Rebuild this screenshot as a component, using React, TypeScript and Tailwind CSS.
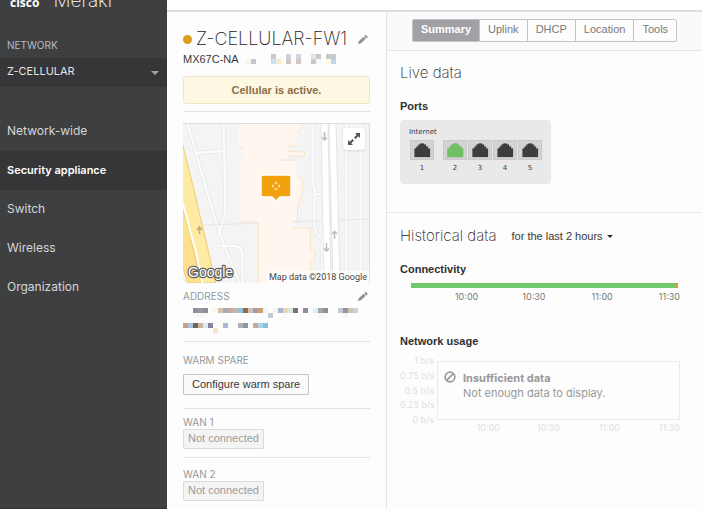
import { useState } from 'react'
import clsx from 'clsx'

const NAV = ['Network-wide', 'Security appliance', 'Switch', 'Wireless', 'Organization']
const TABS = ['Summary', 'Uplink', 'DHCP', 'Location', 'Tools']
const HOURS = ['10:00', '10:30', '11:00', '11:30']
const RATES = ['1 b/s', '0.75 b/s', '0.5 b/s', '0.25 b/s', '0 b/s']

// Each cell is [column, row, colour] on a 5px grid
type Cell = [number, number, string]

const SERIAL: Cell[] = [
  [0, 1, '#fbf3ea'], [1, 1, '#c5c6ca'],
  [5, 0, '#c9cace'], [5, 1, '#c3e4f0'], [6, 1, '#f7e8cd'],
  [8, 0, '#d0d4de'], [8, 1, '#d3c5bf'],
  [10, 0, '#d0d4de'], [10, 1, '#d3c5bf'],
  [13, 0, '#e3e4e5'], [13, 1, '#c8c9cd'], [14, 0, '#c8c9cd'], [14, 1, '#f3f8fb'],
  [16, 0, '#cbc8cc'], [16, 1, '#fdf8e8'], [17, 0, '#c8c9cc'], [17, 1, '#bdd4ea'],
]

const ADDRESS: Cell[] = [
  [2, 0, '#8f8f9d'], [3, 0, '#9a97a5'], [4, 0, '#8d8c98'], [6, 0, '#fdf8e4'],
  [7, 0, '#d0c3b0'], [8, 0, '#a8a9ae'], [9, 0, '#c3aca6'], [10, 0, '#cbb59f'],
  [11, 0, '#8cc3e4'], [12, 0, '#9b6a43'], [13, 0, '#cfc1bc'], [14, 0, '#a19da0'],
  [15, 0, '#cda07a'], [16, 0, '#eef4fb'], [18, 0, '#fbf3e8'], [19, 0, '#a8b8d0'],
  [20, 0, '#f0d6b4'], [21, 0, '#d6ebd8'], [22, 0, '#7b6f80'], [24, 0, '#8d8ca0'],
  [26, 0, '#dceff8'], [27, 0, '#a0a8ac'], [28, 0, '#8f8f98'], [31, 0, '#c9cad0'],
  [32, 0, '#94949e'], [33, 0, '#cfc4b0'], [34, 0, '#d0d0d6'],
  [2, 1, '#f8f8fa'], [3, 1, '#f8f8fa'], [4, 1, '#f9f9fa'], [17, 1, '#c9cace'],
  [20, 1, '#f9f9fa'], [27, 1, '#f6f6f8'], [28, 1, '#f9f9fb'], [32, 1, '#f6f6f8'],
  [0, 3, '#c8a088'], [1, 3, '#a9c3e0'], [2, 3, '#6e665a'], [3, 3, '#cdb49a'],
  [4, 3, '#d9ecf5'], [5, 3, '#8d7fa0'], [6, 4, '#f6e3cc'], [8, 3, '#a8b8d4'],
  [11, 3, '#b0b0bc'], [12, 3, '#9494a0'], [14, 3, '#c8aa94'], [15, 3, '#a8d4ee'],
  [16, 3, '#8cbce0'],
]

function Mosaic({ cells, cols, rows }: { cells: Cell[]; cols: number; rows: number }) {
  return (
    <svg width={cols * 5} height={rows * 5} shapeRendering="crispEdges" aria-hidden="true">
      {cells.map(([x, y, fill]) => (
        <rect key={`${x}-${y}`} x={x * 5} y={y * 5} width="5" height="5" fill={fill} />
      ))}
    </svg>
  )
}

function Caret({ className }: { className?: string }) {
  return (
    <svg viewBox="0 0 8 4" className={clsx('pointer-events-none shrink-0', className)} aria-hidden="true">
      <path d="M0 0h8L4 4z" fill="currentColor" />
    </svg>
  )
}

function EditButton({ label }: { label: string }) {
  return (
    <button type="button" aria-label={label} className="mr-0.5 ml-auto shrink-0 text-[#8f9193]">
      <svg width="10" height="9" viewBox="0 0 10 9">
        <path d="M0 9L.8 6.200L5.600 1.700L7.700 3.800L3 8.300z" fill="currentColor" />
        <path d="M6.200 1.200L7.100.3q.5-.4 1 0L9.500 1.600q.4.400 0 .900l-1.100.9z" fill="currentColor" />
      </svg>
    </button>
  )
}

function Sidebar() {
  return (
    <aside className="w-[167px] shrink-0 border-b border-[#333335] bg-[#3e3f41] font-['Inter',sans-serif] text-[#d6d7d8]">
      <div className="flex h-[11px] items-end gap-3.5 overflow-hidden pl-2.5 text-white">
        <span className="font-['Open_Sans',sans-serif] text-[12px] leading-4 font-bold">cisco</span>
        <span className="text-[19px] leading-5 font-extralight">Meraki</span>
      </div>
      <label htmlFor="network" className="mt-[26px] block px-[7px] text-[10px] leading-4 text-[#b4bcc4]">
        NETWORK
      </label>
      <div className="mt-[5px] flex h-[29px] items-center bg-[#363638] pr-2">
        <select
          id="network"
          className="h-full min-w-0 flex-1 appearance-none bg-transparent px-[7px] pb-0.5 text-[11px] text-[#e2e3e4] outline-none"
        >
          <option>Z-CELLULAR</option>
        </select>
        <Caret className="w-2 text-[#a0a1a3]" />
      </div>
      <nav className="mt-[25px]">
        {NAV.map((item) => (
          <a
            key={item}
            href="#"
            className={clsx(
              'flex h-[39px] items-center px-[7px] pb-px',
              item === 'Security appliance' ? 'bg-[#363638] text-[11px] font-semibold text-white' : 'text-[12px]',
            )}
          >
            {item}
          </a>
        ))}
      </nav>
    </aside>
  )
}

function ApplianceMap() {
  return (
    <div className="relative h-[160px] overflow-hidden border-t border-r border-[#dedede] bg-[#f4f4f4]">
      <svg viewBox="0 0 187 159" preserveAspectRatio="xMidYMid slice" className="size-full" aria-hidden="true">
        {/* side streets */}
        <g fill="none" stroke="#e6e7e9" strokeWidth="4">
          <path d="M5 0L31 90L42 122L57 159M41 0L43 78Q43 96 35 113M13 29L42 27M37 122H52Q60 122 60 132V159" />
          <path d="M130 0V58L133 70H142M132 70V100Q132 112 140 115V159M164 0V159M178 0V159" />
        </g>
        <g fill="none" stroke="#fbfbfb" strokeWidth="2.500">
          <path d="M5 0L31 90L42 122L57 159M41 0L43 78Q43 96 35 113M13 29L42 27M37 122H52Q60 122 60 132V159" />
          <path d="M130 0V58L133 70H142M132 70V100Q132 112 140 115V159M164 0V159M178 0V159" />
        </g>
        <path d="M22 101L80 99L187 95" stroke="#e6e6e6" fill="none" />
        {/* buildings */}
        <path
          d="M56 0H120L119 5L114 9V22H105V27L122 28V32H105V36H98V37H114V51L121 57L120 70L115 88V97H110V104H128V127H132V136H128V159H76V98H58L57 36H61V24H56Z"
          fill="#fef6ef"
        />
        <path
          d="M120 3L114 9M105 22H114M105 27L122 28V32H105M98 36H114M114 51L121 57L119 72L115 84V97H110M58 98H76V159M110 104H128V127H132V136H128V159M56 24H61"
          fill="none"
          stroke="#f8e5c8"
        />
        {/* avenue */}
        <path d="M142 0L145 159M150 0L154 159" stroke="#e4e5e8" strokeWidth="8" />
        <path d="M142 0L145 159M150 0L154 159" stroke="#fff" strokeWidth="6" />
        {/* highway */}
        <path d="M0 20L10 60L27 132L33 159H17L14 140L0 78Z" fill="#fdeaa3" stroke="#f2cb72" />
        <path d="M0 84L8 112L18 159H5L0 142Z" fill="#fde08c" stroke="#f2cb72" />
        <path d="M0 78L14 130L20 159" fill="none" stroke="#fff" strokeWidth="2" />
        {/* traffic arrows */}
        <g fill="none" stroke="#b9bac0" strokeWidth="1.500">
          <path d="M142 8V16M139.500 13.500L142 16L144.500 13.500" />
          <path d="M144 119V127M141.500 124.500L144 127L146.500 124.500" />
          <path d="M152 115V107M149.500 110L152 107.500L154.500 110" />
        </g>
        <path d="M17 110V103M14.500 106L17 103L19.500 106" fill="none" stroke="#c9a57c" strokeWidth="1.500" />
      </svg>

      <svg width="34" height="28" className="absolute top-[50px] left-1/2 -translate-x-1/2" aria-label="Appliance location">
        <path d="M4 1H30Q32 1 32 3V21Q32 23 30 23H21L17 27L13 23H4Q2 23 2 21V3Q2 1 4 1Z" fill="#f2a20c" stroke="#fff" strokeWidth="1.500" />
        <path d="M17 7.500L18.800 9.500H15.200ZM17 16.500L18.800 14.500H15.200ZM12.500 12L14.500 10.200V13.800ZM21.500 12L19.500 10.200V13.800Z" fill="#fdf3dd" />
      </svg>

      <button
        type="button"
        aria-label="Expand map"
        className="absolute top-1 right-1 flex size-[22px] items-center justify-center rounded-sm bg-white shadow-sm"
      >
        <svg width="12" height="12" viewBox="0 0 12 12" fill="#555">
          <path d="M12 0V5L10.300 3.300L7.500 6L6 4.500L8.700 1.700L7 0ZM0 12V7L1.700 8.700L4.500 6L6 7.500L3.300 10.300L5 12Z" />
        </svg>
      </button>

      <svg width="52" height="20" className="absolute bottom-0 left-1" aria-label="Google">
        <text
          x="1"
          y="14"
          fontFamily="Liberation Sans, sans-serif"
          fontSize="14"
          fill="#fff"
          stroke="#5f6063"
          strokeWidth="2.500"
          paintOrder="stroke"
          strokeLinejoin="round"
        >
          Google
        </text>
      </svg>
      <span className="absolute right-0 bottom-0 bg-white/80 px-0.5 font-['Roboto',sans-serif] text-[9px] leading-3 whitespace-nowrap text-[#444]">
        Map data ©2018 Google
      </span>
    </div>
  )
}

function Label({ children }: { children: string }) {
  return <h3 className="font-['Inter',sans-serif] text-[10px] leading-3 text-[#949a9e]">{children}</h3>
}

function Wan({ name, className }: { name: string; className: string }) {
  return (
    <section className={clsx('border-t border-[#e2e3e4]', className)}>
      <Label>{name}</Label>
      <span className="mt-px block w-fit rounded-[1px] border border-[#dadbdc] bg-[#f4f4f4] px-1 pb-0.5 text-[11px] leading-4 text-[#9b9d9f]">
        Not connected
      </span>
    </section>
  )
}

function Details() {
  return (
    <section className="w-[220px] shrink-0 border-r border-[#e2e3e4] px-4">
      <div className="mt-[15px] flex items-center">
        <span className="mr-1 size-[9px] shrink-0 rounded-full bg-[#d99e1c]" />
        <h1 className="font-['Inter',sans-serif] text-[18px] leading-6 font-extralight whitespace-nowrap text-[#1f2022]">
          Z-CELLULAR-FW1
        </h1>
        <EditButton label="Edit name" />
      </div>
      <div className="flex items-center gap-[7px] text-[11px] leading-4 text-[#38393b]">
        MX67C-NA
        <Mosaic cells={SERIAL} cols={18} rows={2} />
      </div>
      <p className="mt-[9px] rounded-[3px] border border-[#f3e5c4] bg-[#fcf8e1] text-center text-[11px] leading-[26px] font-bold text-[#8d6e4a]">
        Cellular is active.
      </p>
      <hr className="mt-[7px] mb-[11px] border-[#e2e3e4]" />
      <ApplianceMap />
      <div className="mt-[7px] flex items-center">
        <Label>ADDRESS</Label>
        <EditButton label="Edit address" />
      </div>
      <div className="mt-1.5">
        <Mosaic cells={ADDRESS} cols={37} rows={5} />
      </div>
      <section className="mt-2 border-t border-[#e2e3e4] pt-3 pb-[13px]">
        <Label>WARM SPARE</Label>
        <button
          type="button"
          className="mt-2 block rounded-[1px] border border-[#c3c4c6] bg-[#fafafa] px-2 text-[11px] leading-[19px] text-[#38393b]"
        >
          Configure warm spare
        </button>
      </section>
      <Wan name="WAN 1" className="pt-[7px] pb-2" />
      <Wan name="WAN 2" className="pt-2.5 pb-2" />
    </section>
  )
}

function Port({ number, active }: { number: number; active?: boolean }) {
  return (
    <div className="w-6 text-center">
      <svg width="24" height="20" shapeRendering="crispEdges" className="block">
        <rect x=".5" y=".5" width="23" height="19" fill="#d2d3d5" stroke="#c8c9cb" />
        <path
          d="M4 17V8H6V6H8V4H10V3H14V4H16V6H18V8H20V17Z"
          fill={active ? '#71c164' : '#3c3d3f'}
          stroke="#b5b3b0"
          strokeWidth=".5"
        />
      </svg>
      <span className="mt-1 block leading-2">{number}</span>
    </div>
  )
}

function Tabs() {
  const [tab, setTab] = useState('Summary')

  return (
    <div className="flex h-[39px] items-start justify-center border-b border-[#e2e3e4] bg-[#fafafa] pt-[7px]">
      <div className="flex rounded-[2px] border border-[#c3c4c6] bg-[#fdfdfd]" role="tablist">
        {TABS.map((name) => (
          <button
            key={name}
            type="button"
            role="tab"
            aria-selected={tab === name}
            onClick={() => setTab(name)}
            className={clsx(
              'border-r border-[#c3c4c6] px-2 pb-0.5 text-[11px] leading-[19px] last:border-r-0',
              tab === name ? 'bg-[#9fa1a4] font-bold text-white' : 'text-[#77797b]',
            )}
          >
            {name}
          </button>
        ))}
      </div>
    </div>
  )
}

function LiveData() {
  return (
    <section className="border-b border-[#eaebec] pr-[22px] pb-7 pl-[13px]">
      <h2 className="pt-3 font-['Inter',sans-serif] text-[15px] leading-5 font-extralight text-[#1f2022]">Live data</h2>
      <h3 className="mt-[15px] text-[11px] leading-4 font-bold text-[#2f3032]">Ports</h3>
      <div className="mt-1.5 inline-block rounded bg-[#e9e9ea] pt-2 pr-[9px] pb-3 pl-[9px] align-top font-['DejaVu_Sans',sans-serif] text-[7px] text-[#38393b]">
        <p className="leading-2">Internet</p>
        <div className="mt-1 ml-px flex gap-px">
          <div className="mr-2">
            <Port number={1} />
          </div>
          <Port number={2} active />
          <Port number={3} />
          <Port number={4} />
          <Port number={5} />
        </div>
      </div>
    </section>
  )
}

function UsageChart() {
  return (
    <div className="mt-1.5 font-['Inter',sans-serif]">
      <div className="flex">
        <div className="flex w-[34px] shrink-0 flex-col justify-between text-right text-[9px] leading-3 whitespace-nowrap text-[#dfe0e1]">
          {RATES.map((rate) => (
            <span key={rate}>{rate}</span>
          ))}
        </div>
        <div className="my-1.5 ml-[3px] h-[59px] flex-1 border border-[#eaebec]">
          <div className="flex gap-[7px] px-1.5 pt-[9px] text-[11px] leading-[15px] text-[#97999b]">
            <svg width="12" height="12" viewBox="0 0 12 12" fill="none" stroke="currentColor" strokeWidth="1.700" className="shrink-0">
              <circle cx="6" cy="6" r="4.800" />
              <path d="M9.200 2.800L2.800 9.200" />
            </svg>
            <div>
              <p className="font-bold">Insufficient data</p>
              <p>Not enough data to display.</p>
            </div>
          </div>
        </div>
      </div>
      <div className="-mt-1 ml-10 grid grid-cols-4 text-right text-[9px] leading-3 text-[#dfe0e1]">
        {HOURS.map((hour) => (
          <span key={hour}>{hour}</span>
        ))}
      </div>
    </div>
  )
}

function HistoricalData() {
  return (
    <section className="pr-[22px] pl-[13px]">
      <div className="flex items-center pt-[13px]">
        <h2 className="font-['Inter',sans-serif] text-[15px] leading-5 font-extralight text-[#1f2022]">Historical data</h2>
        <select
          aria-label="Time range"
          className="ml-[15px] appearance-none bg-transparent text-[11px] leading-4 text-[#38393b] outline-none"
        >
          <option>for the last 2 hours</option>
        </select>
        <Caret className="ml-1 w-1.5 text-[#2f3032]" />
      </div>
      <h3 className="mt-[15px] text-[11px] leading-4 font-bold text-[#2f3032]">Connectivity</h3>
      <div className="mt-1.5 ml-[11px]">
        <div className="mr-0.5 flex h-[5px] bg-[#71c96e]">
          <span className="ml-auto w-[3px] bg-[#dba12e]" />
        </div>
        <div className="mt-[3px] grid grid-cols-4 text-right font-['Inter',sans-serif] text-[9px] leading-3 text-[#77797b]">
          {HOURS.map((hour) => (
            <span key={hour}>{hour}</span>
          ))}
        </div>
      </div>
      <h3 className="mt-[30px] text-[11px] leading-4 font-bold text-[#2f3032]">Network usage</h3>
      <UsageChart />
    </section>
  )
}

export default function App() {
  return (
    <div className="flex min-h-screen bg-[#fdfdfd] font-['Liberation_Sans',Arial,sans-serif]">
      <Sidebar />
      <div className="flex min-w-0 flex-1 flex-col">
        <header className="h-3 border-b-2 border-[#dcdddd] bg-white" />
        <div className="flex flex-1">
          <Details />
          <main className="min-w-0 flex-1">
            <Tabs />
            <LiveData />
            <HistoricalData />
          </main>
        </div>
      </div>
    </div>
  )
}
